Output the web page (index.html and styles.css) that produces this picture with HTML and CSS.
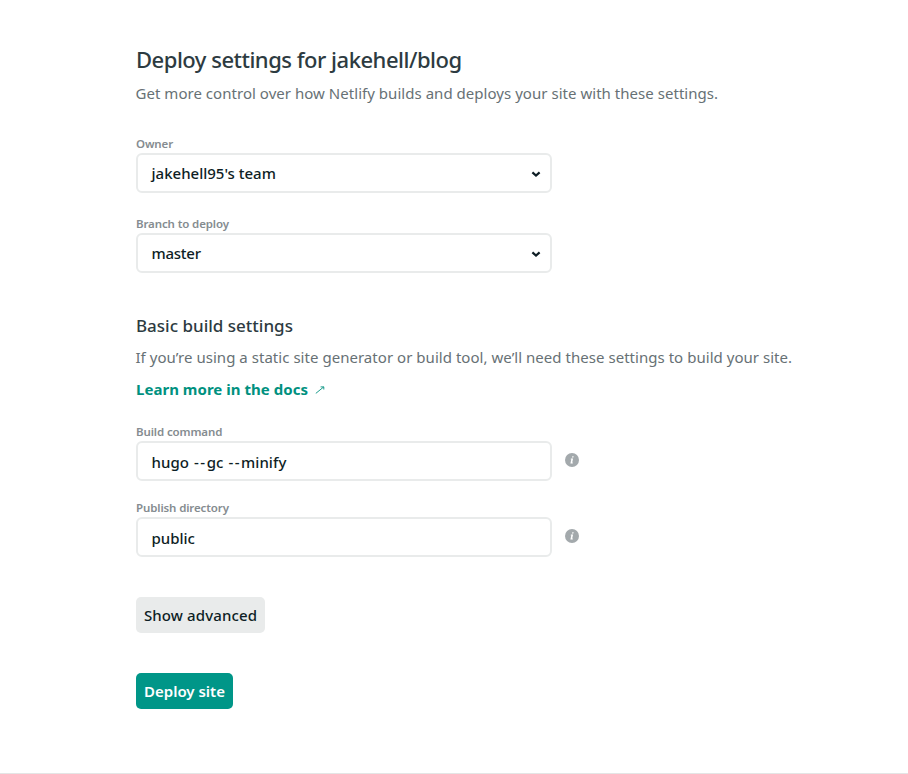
FILE: index.html
```html
<!DOCTYPE html>
<html lang="en">
<head>
<meta charset="utf-8">
<title>Deploy settings</title>
<link rel="stylesheet" href="styles.css">
</head>
<body>
<main class="page">
  <header class="intro">
    <h1>Deploy settings for jakehell/blog</h1>
    <p class="lead">Get more control over how Netlify builds and deploys your site with these settings.</p>
  </header>
  <section class="source">
    <div class="field">
      <span class="label">Owner</span>
      <div class="control select"><span>jakehell95's team</span><svg class="chevron" viewBox="0 0 10 8"><path d="M1.4 2.4 5 5.6 8.6 2.4"/></svg></div>
    </div>
    <div class="field">
      <span class="label">Branch to deploy</span>
      <div class="control select"><span class="branch">master</span><svg class="chevron" viewBox="0 0 10 8"><path d="M1.4 2.4 5 5.6 8.6 2.4"/></svg></div>
    </div>
  </section>
  <section class="build">
    <h2>Basic build settings</h2>
    <p class="hint">If you’re using a static site generator or build tool, we’ll need these settings to build your site.</p>
    <a class="docs" href="#">Learn more in the docs<svg class="arrow" viewBox="0 0 10 8"><path d="M.8 7.4 8.6 1M5.6 .9h3.2v2.6"/></svg></a>
    <div class="field">
      <span class="label">Build command</span>
      <div class="row"><div class="control input"><span class="command">hugo <span class="dash">--</span>gc <span class="dash">--</span>minify</span></div><svg class="info" viewBox="0 0 14 14"><circle cx="7" cy="7" r="7"/><path d="M7.3 3.2h1.4l-.3 1.4H7zM5.9 5.6h2.2l-.9 3.8h.7l-.2 1H5.4l.9-3.9h-.6z"/></svg></div>
    </div>
    <div class="field">
      <span class="label">Publish directory</span>
      <div class="row"><div class="control input">public</div><svg class="info" viewBox="0 0 14 14"><circle cx="7" cy="7" r="7"/><path d="M7.3 3.2h1.4l-.3 1.4H7zM5.9 5.6h2.2l-.9 3.8h.7l-.2 1H5.4l.9-3.9h-.6z"/></svg></div>
    </div>
  </section>
  <button class="btn secondary">Show advanced</button>
  <button class="btn primary">Deploy site</button>
</main>
</body>
</html>
```
FILE: styles.css
```css
* { box-sizing: border-box; }
body { margin: 0; background: #fff; color: #0e1e25; font: 16px/24px "Noto Sans", sans-serif; }
.page { display: flex; flex-direction: column; align-items: flex-start; height: 774px; padding: 43px 0 0 136px; border-bottom: 1px solid #e4e5e5; white-space: nowrap; }
h1, h2, p { margin: 0; }
h1 { font-size: 22px; line-height: 32px; font-weight: 500; color: #2d3b41; letter-spacing: -.49px; }
.lead, .hint { margin-left: -.5px; font-size: 15px; color: #677175; letter-spacing: .035px; }
.lead { margin-top: 6px; }
.source { margin-top: 32px; }
.field { width: 416px; }
.label { display: block; height: 16px; font-size: 11.5px; line-height: 14px; font-weight: 600; color: #858c90; letter-spacing: -.12px; }
.source .field + .field { margin-top: 24px; }
.control { display: flex; align-items: center; flex: none; width: 416px; height: 40px; padding: 0 9px 0 13.5px; border: 2px solid #e9ebeb; border-radius: 6px; font-size: 15px; font-weight: 500; }
.input { padding-top: 2px; }
.branch { letter-spacing: -.25px; }
.command { word-spacing: 1px; letter-spacing: .06px; }
.dash { letter-spacing: 1.5px; }
.select { justify-content: space-between; }
.chevron { width: 10px; height: 8px; margin-top: 2px; fill: none; stroke: #0e1e25; stroke-width: 2.2; }
.build { margin-top: 40px; }
h2 { font-size: 17px; line-height: 26px; font-weight: 500; color: #2d3b41; }
.hint { margin-top: 6px; }
.docs { display: flex; align-items: center; gap: 7px; margin: 8px 0 24px; color: #00917f; font-size: 15px; font-weight: 700; text-decoration: none; letter-spacing: .03px; }
.arrow { width: 10px; height: 8px; margin-top: 1px; fill: none; stroke: #00917f; stroke-width: .9; }
.build .field + .field { margin-top: 20px; }
.row { display: flex; align-items: center; gap: 13px; }
.info { width: 14px; height: 14px; flex: none; margin-bottom: 2px; fill: #a3a9ac; }
.info path { fill: #fff; }
.btn { height: 36px; padding: 0; border: 0; border-radius: 5px; font: 500 15px/36px "Noto Sans", sans-serif; text-align: center; }
.secondary { width: 129px; margin-top: 40px; background: #e9ebeb; color: #0e1e25; letter-spacing: .12px; }
.primary { width: 97px; margin-top: 40px; background: #009688; color: #fff; font-weight: 600; }
```
